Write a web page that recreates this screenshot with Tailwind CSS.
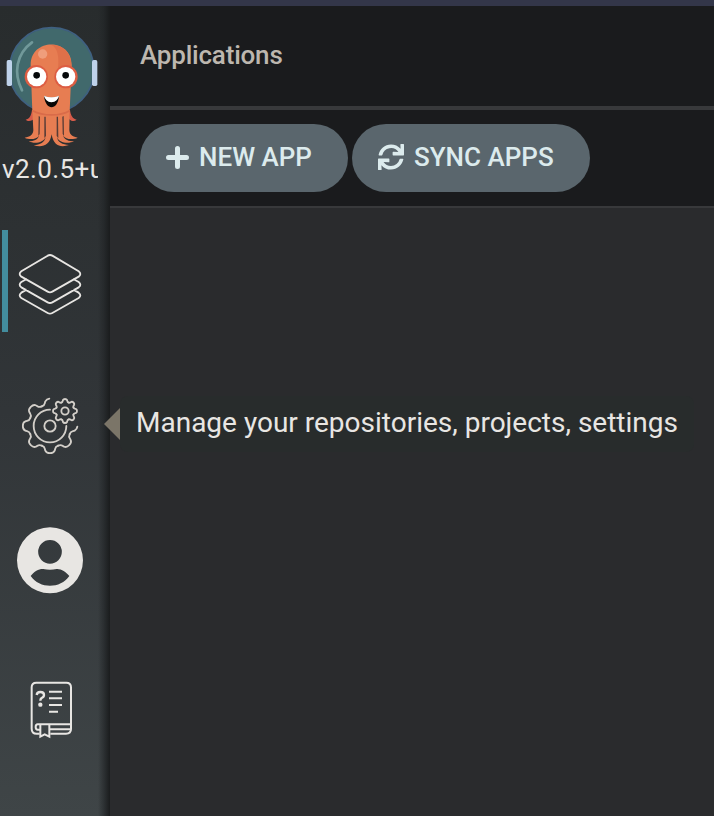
<!DOCTYPE html>
<html lang="en">
<head>
<meta charset="utf-8">
<title>Applications</title>
<script src="https://cdn.jsdelivr.net/npm/@tailwindcss/browser@4"></script>
</head>
<body class="h-[816px] w-[714px] overflow-hidden bg-[#2a2b2d] font-[Roboto,sans-serif]">
<div class="flex h-full flex-col">
  <div class="h-1.5 shrink-0 bg-[#333649]"></div>
  <div class="flex min-h-0 flex-1">
    <aside class="relative flex w-[110px] shrink-0 flex-col bg-linear-to-b from-[#282c2d] via-[#313538] to-[#3f4547]">
      <div class="absolute inset-y-0 right-0 w-3 bg-linear-to-r from-transparent via-[#202325]/60 to-[#1a1c1d]"></div>
      <svg class="mt-[18px] h-[126px] w-[104px] shrink-0" viewBox="0 72 312 378">
        <circle cx="155" cy="210" r="127" fill="#41696c" stroke="#3f6080" stroke-width="5"/>
        <path d="M96 127C48 162 40 220 66 271" fill="none" stroke="#71999a" stroke-width="8" stroke-linecap="round"/>
        <rect x="20" y="180" width="16" height="78" rx="5" fill="#bed2ea"/>
        <rect x="276" y="180" width="16" height="78" rx="5" fill="#bed2ea"/>
        <path d="M96 330C93 350 88 357 77 359C84 366 98 363 104 353L204 353C212 364 222 366 230 359C218 356 212 347 210 330Z" fill="#d65b49"/>
        <path d="M92 195C92 113 215 113 215 195L209 334L208 391C209 406 220 411 233 413C220 420 196 419 190 407C192 419 207 424 222 424C204 433 176 428 171 411C173 427 187 434 207 435C184 443 160 439 155 403C149 439 125 443 101 436C121 434 134 427 137 411C131 428 104 433 86 424C101 424 114 418 117 407C110 419 87 420 74 413C89 410 99 406 100 391L97 334Z" fill="#e77d52"/>
        <path d="M154 135C173 143 178 171 174 205L214 205C217 165 195 134 154 135Z" fill="#df7049"/>
        <path d="M98 332C130 349 180 349 209 332" fill="none" stroke="#d96b49" stroke-width="5"/>
        <path d="M116 348L120 350L119 402L115 408ZM133 350L137 350L138 408L133 414ZM170 350L174 350L175 414L170 408ZM187 350L191 348L192 408L188 402Z" fill="#573c36"/>
        <circle cx="128" cy="162" r="14" fill="#ef9e7c"/>
        <circle cx="109" cy="230" r="35" fill="#dd5d43"/><circle cx="198" cy="230" r="35" fill="#dd5d43"/>
        <circle cx="110" cy="230" r="29" fill="#fff"/><circle cx="197" cy="230" r="29" fill="#fff"/>
        <circle cx="110" cy="226" r="10" fill="#06080a"/><circle cx="197" cy="226" r="10" fill="#06080a"/>
        <path d="M132 288Q154 299 177 288C173 333 137 333 132 288Z" fill="#090706"/>
        <path d="M132 287Q154 296 177 287Q174 304 154 307Q136 304 132 287Z" fill="#fff"/>
      </svg>
      <div class="ml-0.5 h-[36px] w-[96px] shrink-0 overflow-hidden whitespace-nowrap text-[26px] leading-[38px] tracking-[0.4px] text-[#e8e6e3]">v2.0.5+unknown</div>
      <div class="ml-0.5 mt-[44px] flex h-[102px] w-[96px] shrink-0 items-center justify-center border-l-6 border-[#438d9e] pt-[5px] pr-[6px]">
        <svg class="h-16 w-16" viewBox="54 94 192 192" fill="none" stroke="#e8e6e3" stroke-width="5.5" stroke-linejoin="round">
          <path d="M143 105Q150 101 157 105L236 152Q246 160 236 168L157 213Q150 217 143 213L64 168Q54 160 64 152Z"/>
          <path d="M80 175L64 184Q54 192 64 200L143 245Q150 249 157 245L236 200Q246 192 236 184L220 175M80 207L64 216Q54 224 64 232L143 277Q150 281 157 277L236 232Q246 224 236 216L220 207"/>
        </svg>
      </div>
      <div class="mt-[62px] flex h-16 w-[100px] shrink-0 items-center justify-center">
        <svg class="h-16 w-16" viewBox="54 42 192 192" fill="none" stroke="#d3cfc9" stroke-width="5.5" stroke-linecap="round">
          <defs>
            <path id="tooth" d="M-24.5 59C-13 63-17 68-14 74C-10 84 10 84 14 74C17 68 13 63 24.5 59"/>
          </defs>
          <g transform="translate(150 138)">
            <circle r="17"/>
            <path d="M0-49A49 49 0 1 0 49 0"/>
            <use href="#tooth"/><use href="#tooth" transform="rotate(45)"/><use href="#tooth" transform="rotate(90)"/><use href="#tooth" transform="rotate(135)"/><use href="#tooth" transform="rotate(-45)"/>
            <path d="M-24.5-59C-13-63-17-68-14-74Q-10-81-2-82M59 24.5C63 13 68 17 74 14Q81 10 82 2"/>
          </g>
          <g transform="translate(195 93)">
            <circle r="11"/>
            <path id="cog" d="M-10.5 25.4C-6 27-7 31-6 33C-4 37 4 37 6 33C7 31 6 27 10.5 25.4"/>
            <use href="#cog" transform="rotate(45)"/><use href="#cog" transform="rotate(90)"/><use href="#cog" transform="rotate(135)"/><use href="#cog" transform="rotate(180)"/><use href="#cog" transform="rotate(225)"/><use href="#cog" transform="rotate(270)"/><use href="#cog" transform="rotate(315)"/>
          </g>
        </svg>
      </div>
      <div class="mt-[66px] flex h-[72px] w-[100px] shrink-0 items-center justify-center">
        <svg class="h-[72px] w-[72px]" viewBox="42 42 216 216" fill="#e8e6e3">
          <path fill-rule="evenodd" d="M150 52A99 99 0 1 1 150 250A99 99 0 1 1 150 52ZM150 90A35.500 35.500 0 1 0 150 161A35.500 35.500 0 1 0 150 90ZM92 198C103 184 117 176 130 177Q150 182 170 177C184 176 197 185 208 198C181 237 119 237 92 198Z"/>
        </svg>
      </div>
      <div class="mt-[82px] flex h-[64px] w-[102px] shrink-0 items-center justify-center">
        <svg class="h-[64px] w-[48px]" viewBox="81 24 144 192" fill="none" stroke="#e8e6e3" stroke-width="6">
          <path d="M119 191H110Q95 191 95 176V52Q95 38 109 38H199Q213 38 213 52V177Q213 191 198 191H151"/>
          <path d="M213 163H113Q107 163 107 171Q107 179 113 179H119M151 178H213M121 165V200L134 193L148 200V165"/>
          <path d="M110 75Q111 66 121 66Q132 66 132 75Q132 81 125 84Q121 87 121 92" stroke-width="7"/>
          <path d="M147 65H186M147 85H186M147 105H186M147 125H174"/>
          <circle cx="121" cy="104" r="6.5" fill="#e8e6e3" stroke="none"/>
        </svg>
      </div>
    </aside>
    <main class="flex min-w-0 flex-1 flex-col">
      <header class="flex h-[104px] shrink-0 items-center border-b-4 border-[#38393b] bg-[#1a1b1d] pb-[2px] pl-[30px] text-[26px] font-medium text-[#bdb7af]"><h1 class="tracking-[-0.2px]">Applications</h1></header>
      <div class="flex h-[98px] shrink-0 items-center gap-1 border-b-2 border-[#38393b] bg-[#1a1b1d] pl-[30px] text-[26px] font-medium text-[#dcebed]">
        <button class="flex h-[68px] w-[208px] items-center rounded-full bg-[#5a666d] pb-[2px] pl-[26px]">
          <svg class="mr-2.5 h-[23px] w-[23px] shrink-0" viewBox="0 0 23 23" stroke="#dcebed" stroke-width="5" stroke-linecap="round"><path d="M11.500 2.500V20.500M2.500 11.500H20.500"/></svg>
          <span class="whitespace-nowrap">NEW APP</span>
        </button>
        <button class="flex h-[68px] w-[238px] items-center rounded-full bg-[#5a666d] pb-[2px] pl-[26px]">
          <svg class="mr-2.5 h-[26px] w-[26px] shrink-0" viewBox="0 0 512 512" fill="#dcebed"><path d="M440.650 12.570l4 82.770A247.160 247.160 0 0 0 255.830 8C134.730 8 33.910 94.920 12.290 209.820A12 12 0 0 0 24.090 224h49.050a12 12 0 0 0 11.670-9.260 175.910 175.910 0 0 1 317-56.940l-101.460-4.860a12 12 0 0 0-12.570 12v47.410a12 12 0 0 0 12 12H500a12 12 0 0 0 12-12V12a12 12 0 0 0-12-12h-47.370a12 12 0 0 0-11.980 12.570zM255.830 432a175.610 175.610 0 0 1-146-77.800l101.800 4.870a12 12 0 0 0 12.570-12v-47.400a12 12 0 0 0-12-12H12a12 12 0 0 0-12 12V500a12 12 0 0 0 12 12h47.350a12 12 0 0 0 12-12.600l-4.150-82.570A247.170 247.170 0 0 0 255.830 504c121.110 0 221.930-86.920 243.550-201.820a12 12 0 0 0-11.800-14.180h-49.050a12 12 0 0 0-11.670 9.260A175.860 175.860 0 0 1 255.830 432z"/></svg>
          <span class="whitespace-nowrap">SYNC APPS</span>
        </button>
      </div>
    </main>
  </div>
</div>
<div role="tooltip" class="absolute left-[104px] top-[395px] flex h-[58px] items-center">
  <svg class="h-8 w-4" viewBox="0 0 16 32"><path d="M16 0V32L0 16Z" fill="#7b7568"/></svg>
  <div class="flex h-[56px] w-[574px] items-center rounded-lg bg-[#282c2c] pb-0.5 pl-4 text-[28px] whitespace-nowrap text-[#e8e6e3]"><span>Manage your repositories, projects, settings</span></div>
</div>
</body>
</html>
